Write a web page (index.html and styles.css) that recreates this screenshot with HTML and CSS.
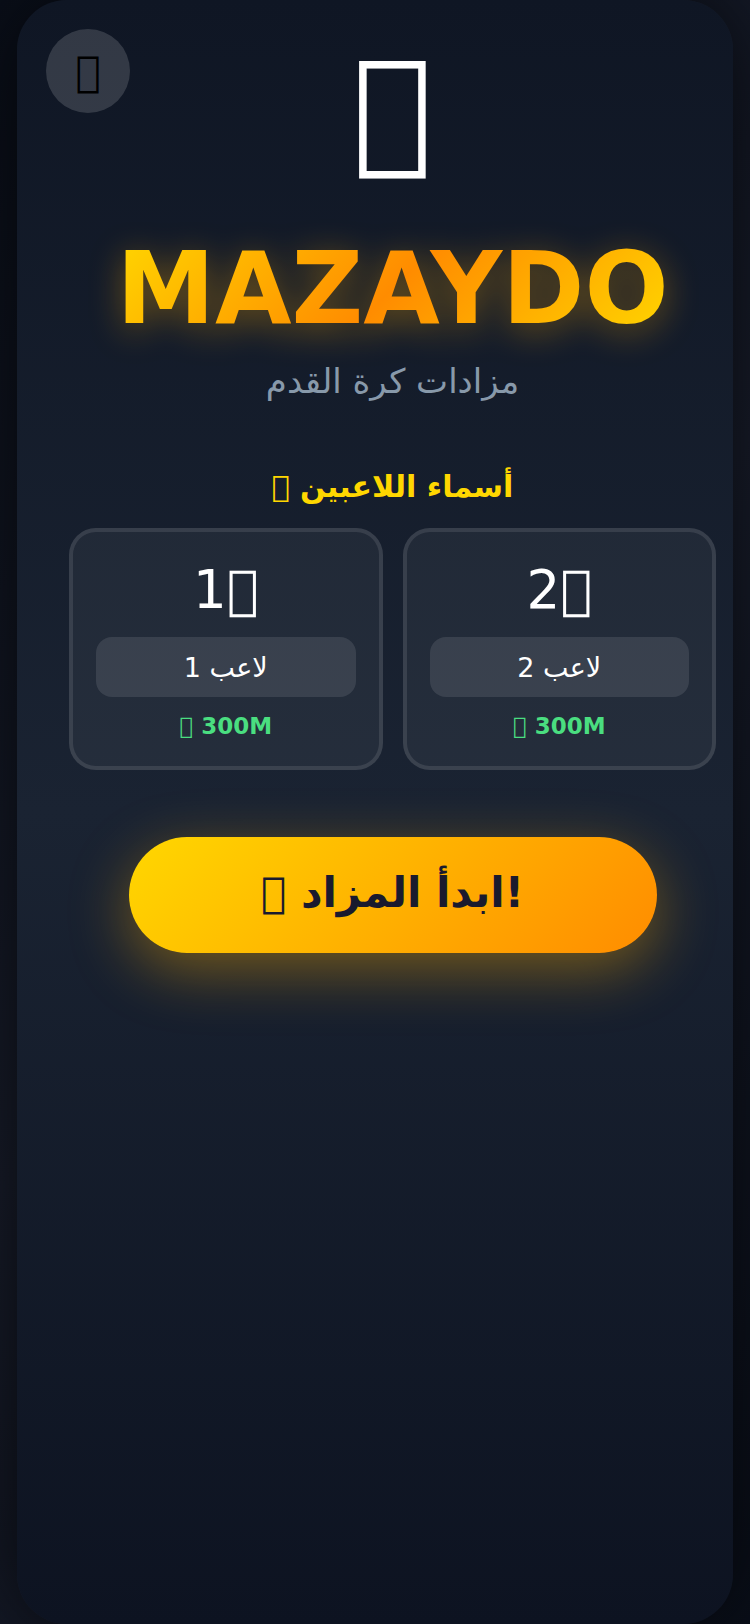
FILE: index.html
```html
<!DOCTYPE html>
<html lang="ar" dir="ltr">
<head>
    <meta charset="UTF-8">
    <meta name="viewport" content="width=device-width, initial-scale=1.0">
    <title>MAZAYDO</title>
    <link rel="stylesheet" href="styles.css">
</head>
<body>
    <main class="phone">
        <button class="sound-btn" type="button">&#x10FFFD;</button>
        <header class="hero">
            <div class="logo">&#x10FFFD;</div>
            <h1 class="title">MAZAYDO</h1>
            <p class="subtitle">مزادات كرة القدم</p>
        </header>
        <section class="players">
            <h2 class="players-title">&#x10FFFD; أسماء اللاعبين</h2>
            <div class="players-grid">
                <div class="player-card">
                    <label class="player-num" for="player1">1&#x10FFFD;</label>
                    <input class="player-name" type="text" id="player1" value="لاعب 1">
                    <div class="budget">&#x10FFFD; 300M</div>
                </div>
                <div class="player-card">
                    <label class="player-num" for="player2">2&#x10FFFD;</label>
                    <input class="player-name" type="text" id="player2" value="لاعب 2">
                    <div class="budget">&#x10FFFD; 300M</div>
                </div>
            </div>
        </section>
        <button class="start-btn" type="button">&#x10FFFD; ابدأ المزاد!</button>
    </main>
</body>
</html>
```

FILE: styles.css
```css
* {
    margin: 0;
    padding: 0;
    box-sizing: border-box;
}
body {
    min-height: 100vh;
    display: flex;
    justify-content: center;
    padding: 0 17px;
    font-family: "DejaVu Sans", sans-serif;
    color: #fff;
    background: linear-gradient(135deg, #0a0f1a 0%, #1a1f2e 50%, #0a0f1a 100%);
    overflow-x: hidden;
}
.phone {
    position: relative;
    flex: 1;
    min-height: 100vh;
    display: flex;
    flex-direction: column;
    align-items: center;
    padding: 32px 17px 32px 52px;
    border-radius: 50px;
    background: linear-gradient(180deg, #0f1624 0%, #1a2332 50%, #0d1321 100%);
    box-shadow: 0 0 100px rgba(0, 0, 0, 0.8);
}
.sound-btn {
    position: absolute;
    top: 29px;
    left: 29px;
    width: 84px;
    height: 84px;
    border: none;
    border-radius: 50%;
    background: rgba(255, 255, 255, 0.15);
    color: #000;
    font-family: inherit;
    font-size: 42px;
    cursor: pointer;
}
.hero {
    display: flex;
    flex-direction: column;
    align-items: center;
    margin-bottom: 68px;
}
.logo {
    font-size: 133px;
    line-height: 155px;
    margin-bottom: 44px;
}
.title {
    font-size: 99px;
    line-height: 115px;
    font-weight: 900;
    margin-bottom: 16px;
    background: linear-gradient(135deg, #ffd700, #ff8c00, #ffd700);
    -webkit-background-clip: text;
    background-clip: text;
    -webkit-text-fill-color: transparent;
    filter: drop-shadow(0 7px 17px rgba(255, 170, 0, 0.4));
}
.subtitle {
    font-size: 34px;
    line-height: 39px;
    color: #8899aa;
}
.players {
    width: 100%;
}
.players-title {
    font-size: 30px;
    line-height: 35px;
    text-align: center;
    color: #ffd700;
    margin-bottom: 24px;
}
.players-grid {
    display: grid;
    grid-template-columns: 1fr 1fr;
    gap: 20px;
}
.player-card {
    display: flex;
    flex-direction: column;
    align-items: center;
    padding: 27px 23px 26px;
    border: 4px solid rgba(255, 255, 255, 0.1);
    border-radius: 27px;
    background: rgba(255, 255, 255, 0.05);
}
.player-num {
    font-size: 53px;
    line-height: 62px;
    margin-bottom: 16px;
}
.player-name {
    width: 100%;
    height: 60px;
    border: none;
    border-radius: 16px;
    background: rgba(255, 255, 255, 0.1);
    color: #fff;
    font-family: inherit;
    font-size: 27px;
    text-align: center;
    margin-bottom: 16px;
}
.budget {
    font-size: 23px;
    line-height: 27px;
    font-weight: bold;
    color: #4ade80;
}
.start-btn {
    width: 528px;
    max-width: 100%;
    margin-top: 67px;
    padding: 31px 16px 36px;
    border: none;
    border-radius: 60px;
    background: linear-gradient(135deg, #ffd700, #ff8c00);
    box-shadow: 0 17px 60px rgba(255, 175, 0, 0.4);
    color: #1a1a2e;
    font-family: inherit;
    font-size: 42px;
    line-height: 49px;
    font-weight: bold;
    cursor: pointer;
}
```
